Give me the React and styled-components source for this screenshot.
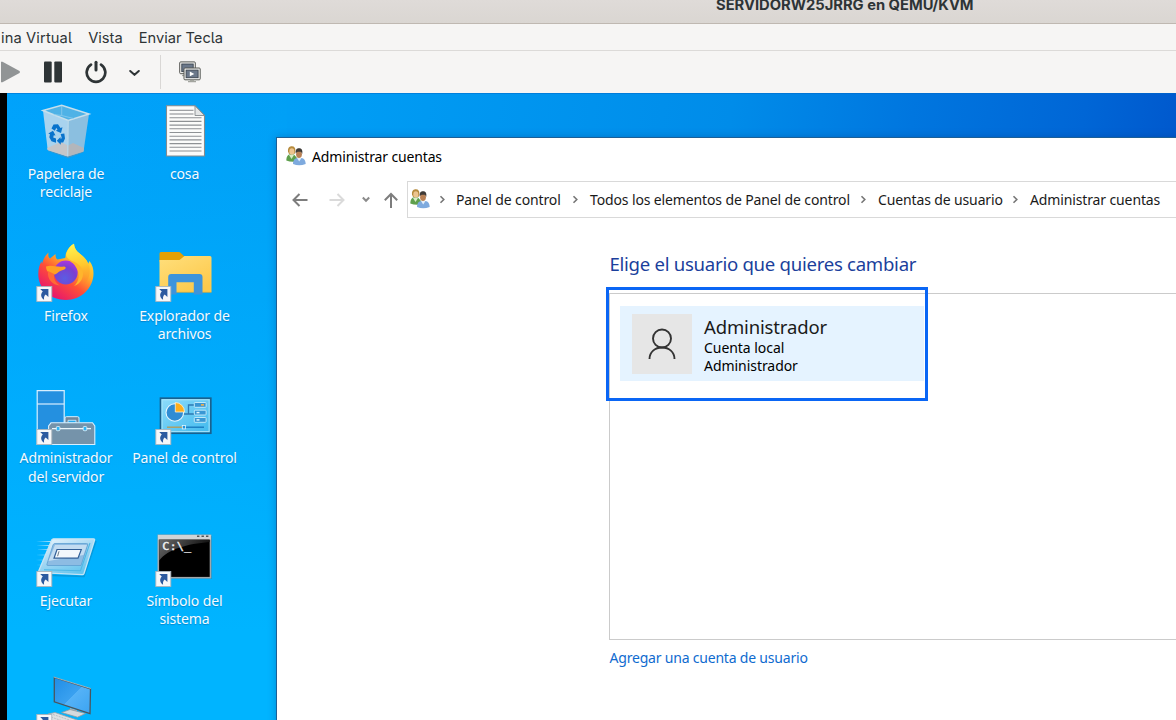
import React from "react";
import styled, { createGlobalStyle } from "styled-components";

const Global = createGlobalStyle`
  * { box-sizing: border-box; }
  html, body { margin: 0; overflow: hidden; }
`;

const Viewer = styled.div`
  width: 1176px;
  height: 720px;
  display: flex;
  flex-direction: column;
  overflow: hidden;
  background: #f6f5f4;
  color: #2e3436;
  font-family: Inter, "Liberation Sans", sans-serif;
  font-feature-settings: "cv05";
`;

const TitleBar = styled.header`
  flex: 0 0 24px;
  display: flex;
  align-items: flex-start;
  padding-left: 716px;
  background: linear-gradient(#dfdbd8, #dad6d2);
  border-bottom: 1px solid #bfb8b1;
`;

const TitleText = styled.span`
  margin-top: -5px;
  font-size: 14.72px;
  line-height: 20px;
  font-weight: 700;
  font-feature-settings: normal;
  white-space: nowrap;
`;

const MenuBar = styled.nav`
  flex: 0 0 27px;
  display: flex;
  align-items: center;
  gap: 16px;
  padding-left: 1px;
  border-bottom: 1px solid #dcdad8;
`;

const MenuItem = styled.span`
  font-size: 14.67px;
  line-height: 20px;
  padding-top: 1px;
  letter-spacing: ${(p) => p.$track || 0}px;
  white-space: nowrap;
`;

const Toolbar = styled.div`
  flex: 0 0 42px;
  display: flex;
  align-items: center;
`;

const Tool = styled.span`
  display: flex;
  margin-left: ${(p) => p.$gap || 0}px;
`;

const Divider = styled.i`
  width: 1px;
  height: 34px;
  margin-left: 19.5px;
  background: #d9d7d5;
`;

const Screen = styled.main`
  flex: 1;
  position: relative;
  display: flex;
  border-left: 7px solid #000;
  overflow: hidden;
  font-family: "Noto Sans", "Open Sans", sans-serif;
  font-feature-settings: normal;
  background:
    linear-gradient(#0068c8, transparent) 0 0 / 100% 1px no-repeat,
    linear-gradient(180deg, rgba(0, 182, 255, 0) 0, #00b4ff 540px) 0 0 / 280px 100% no-repeat,
    linear-gradient(98deg, #00a2fb 0, #009ff6 280px, #008ce9 720px, #0076df 900px, #0066d6 1070px, #0055cb 1190px);
`;

const IconGrid = styled.ul`
  list-style: none;
  margin: 0;
  padding: 9px 0 0;
  display: grid;
  grid-template-columns: 118px 119px;
  grid-auto-rows: 142.4px;
`;

const DesktopItem = styled.li`
  display: flex;
  flex-direction: column;
  align-items: center;
`;

const Art = styled.svg`
  width: 60px;
  height: 60px;
  flex: none;
  overflow: visible;
`;

const Label = styled.span`
  width: 112px;
  margin-top: 2.6px;
  color: #f4fbff;
  font-size: 14px;
  line-height: 18.4px;
  letter-spacing: -0.13px;
  text-align: center;
  text-shadow: 0 1px 1px rgba(0, 60, 120, 0.35);
`;

const Win = styled.section`
  position: absolute;
  left: 269px;
  top: 44px;
  width: 960px;
  height: 640px;
  display: flex;
  flex-direction: column;
  background: #fff;
  border: 1px solid #1c5f96;
  color: #1a1a1a;
  box-shadow: 0 0 8px rgba(0, 50, 110, 0.3);
`;

const Caption = styled.div`
  height: 36px;
  display: flex;
  align-items: center;
  gap: 6px;
  padding-left: 9px;
  font-size: 14px;
  letter-spacing: -0.14px;
  color: #000;
`;

const NavRow = styled.div`
  display: flex;
  align-items: center;
  height: 37px;
  margin-top: 7px;
  padding-left: 4.5px;
`;

const NavButton = styled.span`
  display: flex;
  justify-content: center;
  flex: 0 0 ${(p) => p.$w}px;
`;

const Address = styled.div`
  flex: 1;
  height: 37px;
  display: flex;
  align-items: center;
  padding: 0 0 1px 2px;
  border: 1px solid #d9d9d9;
  font-size: 14px;
  letter-spacing: -0.13px;
  white-space: nowrap;
`;

const Crumb = styled.span`
  width: ${(p) => p.$w}px;
`;

const Sep = styled.span`
  display: flex;
  justify-content: center;
  width: ${(p) => p.$w || 28}px;
  padding-right: 2px;
`;

const Content = styled.div`
  padding: 33px 0 0 332px;
`;

const Heading = styled.h1`
  margin: 0;
  padding-left: 0.5px;
  font-size: 18.6px;
  font-weight: 400;
  line-height: 26px;
  letter-spacing: -0.28px;
  color: #1b3f9c;
`;

const AccountList = styled.div`
  position: relative;
  height: 347px;
  margin-top: 16px;
  padding: 12px 0 0 10px;
  border: 1.4px solid #cbcbcb;
`;

const Account = styled.div`
  width: 304px;
  height: 75px;
  display: flex;
  align-items: center;
  gap: 12px;
  padding-left: 12px;
  background: #e5f3ff;
`;

const Avatar = styled.div`
  width: 60px;
  height: 60px;
  display: flex;
  align-items: center;
  justify-content: center;
  background: #e6e6e6;
`;

const AccountText = styled.div`
  display: flex;
  flex-direction: column;
  padding-top: 3.4px;
`;

const Name = styled.strong`
  font-size: 18.5px;
  font-weight: 400;
  line-height: 24px;
  letter-spacing: -0.15px;
`;

const Detail = styled.span`
  font-size: 14px;
  line-height: 18.4px;
  letter-spacing: -0.05px;
  color: #000;
`;

const Highlight = styled.div`
  position: absolute;
  left: -4px;
  top: -7px;
  width: 322px;
  height: 114px;
  border: 3px solid #0a66f5;
`;

const AddLink = styled.a`
  display: block;
  padding-left: 0.5px;
  margin-top: 8px;
  font-size: 14px;
  line-height: 20px;
  letter-spacing: -0.2px;
  color: #0f6bcf;
`;

const Shortcut = () => (
  <g>
    <rect x="0.8" y="42.500" width="15" height="15" fill="#f6f7f9" stroke="#a9b4bd" strokeWidth="0.9" />
    <path d="M4.2 44.9h8.2v8.200l-2.700-2.500c-1.600 1.300-1.900 2.800-1.600 5.200-3.200-2.300-4-5.500-1.300-8.300z" fill="#2c5aa0" />
  </g>
);

const Bin = () => (
  <Art viewBox="0 0 60 60">
    <path d="M12 46l20 6 16-5-1 3.500-15 5.500-20-7z" fill="#6e8fa6" opacity=".6" />
    <path d="M7 8.500L32.300 18.500L31.700 54.500L11.700 48Z" fill="#a9d3ee" />
    <path d="M53 12L32.300 18.500L31.700 54.500L47.500 49.500Z" fill="#8bbfe0" />
    <path d="M11.200 46l13.500-6 7.300 3.500V54.500L11.700 48z" fill="#c5c6c9" />
    <path d="M32 43.500l5-2.500 10.900 5-.4 3.500-15.800 5z" fill="#b3b6bb" />
    <path d="M7 8.500L25.700 3.300L53 12L32.300 18.500Z" fill="#4fb2e6" stroke="#c6dfec" strokeWidth="1.500" />
    <path d="M25.700 4v9.500M25.700 13.500l-8-1M25.700 13.500l12 3" stroke="#8ccbed" strokeWidth=".8" fill="none" />
    <path d="M32.300 18.500L31.700 54" stroke="#bcd9e9" strokeWidth="1.200" />
    <g fill="#0873cc">
      <path d="M15.500 26.500L17.500 22.500L22 22.300L24.500 26L26.500 25.300L25 31L19.800 28.800L21.500 27.800L20.300 25.800L18.800 28.700Z" />
      <path d="M12.300 31.500L17 28.800L19.500 33.500L17.800 33.200L17.200 35.500L20 36.500V40.800L15.500 39.300L13.300 35.300L14 32.300Z" />
      <path d="M24.700 32L28.300 31.500L29 36.500L27.200 40.500H24.800V42.800L20.800 38.800L24.500 35V36.800L25.800 36.200Z" />
    </g>
  </Art>
);

const docLines = Array.from({ length: 12 }, (_, i) => 8.3 + i * 3.7);
const Doc = () => (
  <Art viewBox="0 0 60 60">
    <path d="M11.500 3.800H40L49.500 13.500V54H11.500Z" fill="#fbfbfa" stroke="#868b8e" strokeWidth="1.100" />
    <path d="M40 3.800V13.500H49.500Z" fill="#e3e5e6" stroke="#868b8e" strokeWidth=".9" />
    {docLines.map((y, i) => (
      <path key={y} d={`M14.500 ${y}H${i < 2 ? 38.5 : 46.5}`} stroke="#8e9194" strokeWidth="1.100" />
    ))}
  </Art>
);

const Firefox = () => (
  <Art viewBox="0 0 60 60">
    <defs>
      <linearGradient id="fxBody" x1=".85" y1=".1" x2=".25" y2=".95">
        <stop offset="0" stopColor="#ffe83f" />
        <stop offset=".35" stopColor="#ffb02a" />
        <stop offset=".62" stopColor="#ff5036" />
        <stop offset="1" stopColor="#e6146f" />
      </linearGradient>
      <linearGradient id="fxTail" x1=".4" y1="0" x2=".5" y2="1">
        <stop offset="0" stopColor="#fff44f" />
        <stop offset=".55" stopColor="#ffc62c" />
        <stop offset="1" stopColor="#ff7a2b" stopOpacity=".2" />
      </linearGradient>
      <radialGradient id="fxCore" cx=".45" cy=".75" r=".8">
        <stop offset="0" stopColor="#5a5de4" />
        <stop offset=".6" stopColor="#7a3fd0" />
        <stop offset="1" stopColor="#b535e0" />
      </radialGradient>
    </defs>
    <path d="M12.500 8.500C12 12 12.500 13.500 14 14.500L19.500 10C19.500 13 20 14.500 21.500 15.500L29 14C30 13 29 11 30.500 8C32 4.500 34.500 1.500 38 -.3C38.500 6 42 8 46 11.500C50 15 51.500 18 52 20L53.500 17C56.500 21 57.500 25 57.500 29.500C57.500 44 45 56 30 56C14 56 2.300 44.500 2.300 30C2.300 25 3.500 20.500 5.500 17.500L6 20C7 16 9 11.500 12.500 8.500Z" fill="url(#fxBody)" />
    <path d="M30.500 9C32 4.500 34.500 1.500 38 -.3C38.500 6 42 8 46 11.500C57 20 55 34 48 41C49 33 45 21 36 17C32.500 15 29 13 30.500 9Z" fill="url(#fxTail)" />
    <circle cx="29.800" cy="28.500" r="11.900" fill="url(#fxCore)" />
    <path d="M10 22.500C16 20.500 20 23.500 28 22.500C31 23 30 25.500 25.500 26.500C22 27.500 21.500 30 18.500 30.500C13 30 10 27 10 22.500Z" fill="#ffa024" />
    <path d="M18.200 30C17.500 35 19.500 39 24 41.500C16 41 11 35 12 27Z" fill="#ff6a35" />
    <path d="M34 17.500C38 19 40 23 42 27C44 32 42 39 38 42C45 40 49 32 46 25C43 20 38 16.500 34 17.500Z" fill="#ffb52c" />
    <Shortcut />
  </Art>
);

const Folder = () => (
  <Art viewBox="0 0 60 60">
    <defs>
      <linearGradient id="folder" x1="0" y1="0" x2=".7" y2="1">
        <stop offset="0" stopColor="#ffdf7c" />
        <stop offset="1" stopColor="#fdc94b" />
      </linearGradient>
    </defs>
    <path d="M4.500 9.500Q4.500 8 6 8H23.500Q25 8 26 9.300L29 12H34V18H4.500Z" fill="#e3a004" />
    <path d="M4.500 16H24.500L29.500 12H55Q56.500 12 56.500 13.500V48H4.500Z" fill="url(#folder)" />
    <path d="M4.500 48.300H56.500" stroke="#e8ad35" strokeWidth=".8" />
    <path d="M13.200 50.500V33Q13.200 30 16.200 30H44.500Q47.500 30 47.500 33V50.500H38.800V38.300H21.500V50.500Z" fill="#3d94dc" />
    <Shortcut />
  </Art>
);

const Server = () => (
  <Art viewBox="0 0 60 60">
    <path d="M1.200 3.700H28.200V57.500H1.200Z" fill="#2490e0" stroke="#d8efff" strokeWidth="1.200" />
    <path d="M1.200 17H28.200" stroke="#d8efff" strokeWidth="1.200" />
    <path d="M29 35.500V31Q29 29.700 30.300 29.700H41.700Q43 29.700 43 31V35.500" fill="#71879b" stroke="#d8efff" strokeWidth="1" />
    <path d="M32 33.300H40V36H32Z" fill="#25a9ee" stroke="#d8efff" strokeWidth=".8" />
    <path d="M15 35.800H56.500L58.800 39V57.500H12.600V39Z" fill="#7593aa" stroke="#d8efff" strokeWidth="1.100" />
    <path d="M16 41.600H55" stroke="#e9f5fc" strokeWidth="1.300" />
    <rect x="20.300" y="39.500" width="3.600" height="4.200" rx="1" fill="#2fb4f4" stroke="#eef8fe" strokeWidth=".8" />
    <rect x="47.200" y="39.500" width="3.600" height="4.200" rx="1" fill="#2fb4f4" stroke="#eef8fe" strokeWidth=".8" />
    <Shortcut />
  </Art>
);

const ControlPanel = () => (
  <Art viewBox="0 0 60 60">
    <defs>
      <linearGradient id="cpFace" x1="0" y1="0" x2="1" y2="1">
        <stop offset="0" stopColor="#8fdcfa" />
        <stop offset="1" stopColor="#3fb9ee" />
      </linearGradient>
    </defs>
    <rect x="5.500" y="11.200" width="50.300" height="35" fill="url(#cpFace)" stroke="#19618f" strokeWidth="1.700" />
    <rect x="7.100" y="12.800" width="47" height="31.800" fill="none" stroke="#a6e4fb" strokeWidth="1" />
    <circle cx="19.800" cy="25.500" r="8.800" fill="#2f8cd4" stroke="#e5f6fd" strokeWidth="1.100" />
    <path d="M20.300 25V15.500A9.300 9.300 0 0 1 29.500 25Z" fill="#ffae1b" stroke="#fff3d6" strokeWidth=".8" />
    <path d="M29 27H33.500V18H39M33.500 27H39" fill="none" stroke="#2d79b3" strokeWidth="1.300" />
    {[15.5, 23.2, 30.5].map((y, i) => (
      <g key={y}>
        <rect x="39.300" y={y} width="11.800" height="4.800" rx=".8" fill="#3a97d4" stroke="#cbeefc" strokeWidth=".9" />
        <path d={`M${i ? 41.5 : 46} ${y + 2.4}h3`} stroke={i ? "#e3f7ff" : "#ffb340"} strokeWidth="1.500" />
      </g>
    ))}
    <path d="M12 40.200H28" stroke="#b89a54" strokeWidth="1.300" />
    <path d="M28 40.200H49" stroke="#1576bd" strokeWidth="1.300" />
    <rect x="27.300" y="38.500" width="3.200" height="3.400" fill="#1d94df" stroke="#e5f6fd" strokeWidth=".8" />
    <Shortcut />
  </Art>
);

const Run = () => (
  <Art viewBox="0 0 60 60">
    <defs>
      <linearGradient id="runFace" x1="0" y1="0" x2=".6" y2="1">
        <stop offset="0" stopColor="#f0f9fe" />
        <stop offset=".5" stopColor="#a8d9f4" />
        <stop offset="1" stopColor="#68c6ee" />
      </linearGradient>
      <linearGradient id="runTrail" x1="0" y1="0" x2="1" y2="0">
        <stop offset="0" stopColor="#a5e0fa" stopOpacity="0" />
        <stop offset="1" stopColor="#b5e4fa" />
      </linearGradient>
    </defs>
    <path d="M.5 12h14.500v1H.5zM1 16h12.500v1H1zM2 20h10v1H2zM1 25.500h9v1H1zM0 30.500h8v1H0zM1 35.500h5v1H1z" fill="url(#runTrail)" />
    <path d="M4 46l44 1.500L60 12" fill="none" stroke="#14638f" strokeWidth="1.500" opacity=".3" />
    <path d="M17.500 9.800H57.500Q59 9.800 58.500 11.300L48 44.500Q47.500 45.700 46 45.600L3.500 43.700Q2 43.500 2.700 42L15.700 11Q16.200 9.800 17.500 9.800Z" fill="url(#runFace)" stroke="#c5e4f4" strokeWidth="1.300" />
    <path d="M19 14.500H50.500Q52.300 14.500 51.700 16L45 36.500H12Q10.300 36.500 11 35L17 16Q17.500 14.500 19 14.500Z" fill="#8dbce3" stroke="#5e9fd2" strokeWidth=".8" />
    <path d="M19 16H51L47.500 26L12.500 32Z" fill="#d8eaf7" opacity=".7" />
    <path d="M8 40.800L44.500 41.800L54 14" fill="none" stroke="#4db8e6" strokeWidth="1.100" />
    <path d="M21 20.500H45.300L42 29.200H18Z" fill="#f3f8fc" stroke="#315f97" strokeWidth="1.200" />
    <path d="M23 22.300L21.600 27.200" stroke="#5c6c7a" strokeWidth=".9" />
    <Shortcut />
  </Art>
);

const Prompt = styled.text`
  font: 400 10px "DejaVu Sans Mono", monospace;
  fill: #f1f1f1;
  stroke: #f1f1f1;
  stroke-width: 0.3px;
`;

const Console = () => (
  <Art viewBox="0 0 60 60">
    <defs>
      <linearGradient id="glare" x1="0" y1="0" x2="1" y2=".35">
        <stop offset="0" stopColor="#6a6a6a" />
        <stop offset="1" stopColor="#0a0a0a" />
      </linearGradient>
    </defs>
    <rect x="4" y="7" width="53" height="43" fill="#0f5f8c" opacity=".35" />
    <rect x="3.300" y="6.300" width="52.200" height="42.400" fill="#000" stroke="#a2a7aa" strokeWidth="1.600" />
    <rect x="3" y="6" width="52.800" height="4.600" fill="#d0d4d6" />
    <path d="M42 7.300h2.400M46.500 7.300h2.400M51 7.300h2.400" stroke="#4f5558" strokeWidth="1.600" />
    <path d="M4.200 10.800H54.600V13C32 15 13 20 4.200 31.500Z" fill="url(#glare)" />
    <Prompt x="7.200" y="21" textLength="29" lengthAdjust="spacingAndGlyphs">C:\_</Prompt>
    <Shortcut />
  </Art>
);

const Computer = () => (
  <Art viewBox="0 0 60 60">
    <defs>
      <linearGradient id="pcFace" x1="0" y1="0" x2="1" y2="1">
        <stop offset="0" stopColor="#1f8de6" />
        <stop offset=".5" stopColor="#3aa1f0" />
        <stop offset=".51" stopColor="#55b2f7" />
        <stop offset="1" stopColor="#3ba4f2" />
      </linearGradient>
    </defs>
    <path d="M34 36l7 2v5l-7-1z" fill="#a8b2b8" />
    <path d="M25.500 40.500L34 37.500l15.500 4-8 3.700z" fill="#d4dadd" stroke="#8d99a1" strokeWidth=".8" />
    <path d="M18.300 5.500L54.500 17L54 41.700L18.300 29.800Z" fill="url(#pcFace)" stroke="#4a555d" strokeWidth="1.300" />
    <path d="M17.600 5L54.800 16.500" stroke="#c5cdd2" strokeWidth=".7" />
    <path d="M12 42L19 40.500L50 51V60H12Z" fill="#dce0e3" stroke="#98a3aa" strokeWidth=".8" />
    <path d="M17 42.500l30 10M15 45l32 11" stroke="#b4bbc0" strokeWidth=".9" strokeDasharray="2 1" />
    <Shortcut />
  </Art>
);

const People = () => (
  <svg width="20" height="20" viewBox="0 0 20 20">
    <path d="M.3 14.500C.3 10.500 2 8.500 4 8.300L8 8.500L11 12V15.500Q5 16.500 .3 14.500Z" fill="#5e9f4c" />
    <path d="M3 9l2.500 4L8 9z" fill="#d9ecc9" />
    <path d="M2 5.500C1.500 1.500 4 .3 5.800.3C8.500.3 9.800 2.300 9.300 5.500L8.500 8H3Z" fill="#b68b3d" />
    <ellipse cx="5.800" cy="5.500" rx="2.500" ry="3.200" fill="#ecc48f" />
    <path d="M7 18C7 14 9 12.300 11 12H15.500C18 12.300 19.700 14.500 19.700 18Q13 20.500 7 18Z" fill="#7eaade" />
    <path d="M11 12l2.200 3.500L15.500 12z" fill="#e3effa" />
    <ellipse cx="13" cy="8.300" rx="2.900" ry="3.800" fill="#b98155" />
    <path d="M9.700 7.500C9.300 3.500 11 2.300 13 2.300C15.500 2.300 17 4 16.200 8C15.500 6 15 5.500 13.500 5.700C11.500 5.500 10.500 6 9.700 7.500Z" fill="#3e3a36" />
  </svg>
);

const Chevron = () => (
  <svg width="7" height="9" viewBox="0 0 7 9">
    <path d="M1.500 1.200L4.800 4.500L1.500 7.800" fill="none" stroke="#767676" strokeWidth="1.600" />
  </svg>
);

const Arrow = ({ d, color, w = 16 }) => (
  <svg width={w} height="16" viewBox={`0 0 ${w} 16`}>
    <path d={d} fill="none" stroke={color} strokeWidth="2" />
  </svg>
);

const desktop = [
  [Bin, "Papelera de reciclaje"],
  [Doc, "cosa"],
  [Firefox, "Firefox"],
  [Folder, "Explorador de archivos"],
  [Server, "Administrador del servidor"],
  [ControlPanel, "Panel de control"],
  [Run, "Ejecutar"],
  [Console, "Símbolo del sistema"],
  [Computer, ""],
];

export default function App() {
  return (
    <Viewer>
      <Global />
      <TitleBar>
        <TitleText>SERVIDORW25JRRG en QEMU/KVM</TitleText>
      </TitleBar>
      <MenuBar>
        <MenuItem $track={0.13}>ina Virtual</MenuItem>
        <MenuItem>Vista</MenuItem>
        <MenuItem>Enviar Tecla</MenuItem>
      </MenuBar>
      <Toolbar>
        <Tool>
          <svg width="21" height="22" viewBox="0 0 21 22">
            <path d="M1 .8L2.500 .8L19.500 10Q20.500 11 19.500 12L2.500 21.200H1Z" fill="#919495" />
          </svg>
        </Tool>
        <Tool $gap={23}>
          <svg width="18" height="22" viewBox="0 0 18 22">
            <rect x="0" y=".5" width="7.700" height="21" rx="1" fill="#2e3436" />
            <rect x="10.300" y=".5" width="7.700" height="21" rx="1" fill="#2e3436" />
          </svg>
        </Tool>
        <Tool $gap={23}>
          <svg width="22" height="24" viewBox="0 0 22 24">
            <path d="M6 4.700A9.300 9.300 0 1 0 16 4.700" fill="none" stroke="#2e3436" strokeWidth="2.700" strokeLinecap="round" />
            <path d="M11 2.300V10" stroke="#2e3436" strokeWidth="3" strokeLinecap="round" />
          </svg>
        </Tool>
        <Tool $gap={22}>
          <svg width="11" height="8" viewBox="0 0 11 8">
            <path d="M1.200 3L5.500 6.800L9.800 3" fill="none" stroke="#2e3436" strokeWidth="2" strokeLinecap="round" />
          </svg>
        </Tool>
        <Divider />
        <Tool $gap={18}>
          <svg width="22" height="22" viewBox="0 0 22 22">
            <rect x=".7" y=".9" width="15.600" height="11.800" rx="1" fill="#f4f4f2" stroke="#555753" strokeWidth="1" />
            <rect x="2.800" y="3" width="11.400" height="7.600" fill="#6b788a" stroke="#3b444f" strokeWidth=".9" />
            <path d="M3 14.500h4" stroke="#a3a59f" strokeWidth="1.300" />
            <rect x="5" y="7" width="16.200" height="11.800" rx="1" fill="#f4f4f2" stroke="#555753" strokeWidth="1" />
            <rect x="7.100" y="9.100" width="12" height="7.600" fill="#6b788a" stroke="#3b444f" strokeWidth=".9" />
            <path d="M10.800 10.500v4.800l4.500-2.400z" fill="#fff" />
            <path d="M9 20.700H17M11 19.300h4" stroke="#a3a59f" strokeWidth="1.300" />
          </svg>
        </Tool>
      </Toolbar>
      <Screen>
        <IconGrid>
          {desktop.map(([Icon, label], i) => (
            <DesktopItem key={i}>
              <Icon />
              <Label>{label}</Label>
            </DesktopItem>
          ))}
        </IconGrid>
        <Win>
          <Caption>
            <People />
            Administrar cuentas
          </Caption>
          <NavRow>
            <NavButton $w={37}><Arrow color="#7d7d7d" d="M15.500 8H1.500M7.500 2L1.500 8L7.500 14" /></NavButton>
            <NavButton $w={37}><Arrow color="#dadada" d="M.5 8H14.500M8.500 2L14.500 8L8.500 14" /></NavButton>
            <NavButton $w={20}><Arrow w={8} color="#8b8b8b" d="M.8 5.500L4 8.800L7.200 5.500" /></NavButton>
            <NavButton $w={31.5}><Arrow color="#7d7d7d" d="M8 16V2M1.800 8.200L8 2L14.200 8.200" /></NavButton>
            <Address>
              <People />
              <Sep $w={26}><Chevron /></Sep>
              <Crumb $w={106}>Panel de control</Crumb>
              <Sep><Chevron /></Sep>
              <Crumb $w={260}>Todos los elementos de Panel de control</Crumb>
              <Sep><Chevron /></Sep>
              <Crumb $w={124}>Cuentas de usuario</Crumb>
              <Sep><Chevron /></Sep>
              <Crumb $w={130}>Administrar cuentas</Crumb>
            </Address>
          </NavRow>
          <Content>
            <Heading>Elige el usuario que quieres cambiar</Heading>
            <AccountList>
              <Account>
                <Avatar>
                  <svg width="28" height="32" viewBox="0 0 28 32">
                    <g fill="none" stroke="#333" strokeWidth="1.900">
                      <circle cx="14" cy="10.500" r="9" />
                      <path d="M1.500 31C1.500 24 7 19.500 14 19.500S26.500 24 26.500 31" />
                    </g>
                  </svg>
                </Avatar>
                <AccountText>
                  <Name>Administrador</Name>
                  <Detail>Cuenta local</Detail>
                  <Detail>Administrador</Detail>
                </AccountText>
              </Account>
              <Highlight />
            </AccountList>
            <AddLink>Agregar una cuenta de usuario</AddLink>
          </Content>
        </Win>
      </Screen>
    </Viewer>
  );
}
